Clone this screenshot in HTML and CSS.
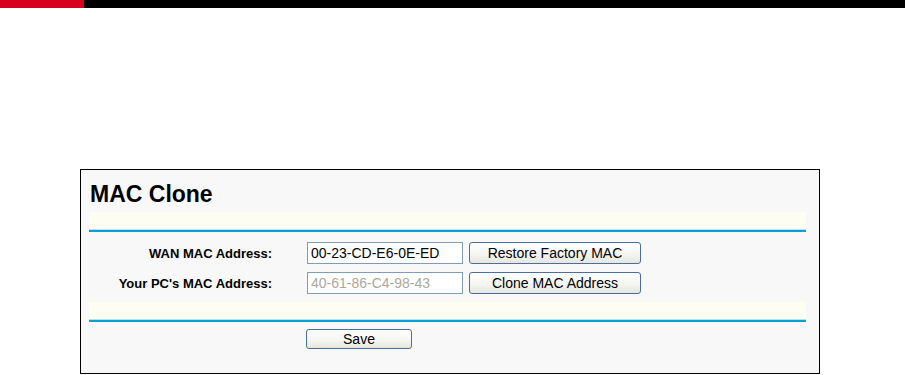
FILE: index.html
```html
<!DOCTYPE html>
<html lang="en">
<head>
  <meta charset="UTF-8">
  <title>MAC Clone</title>
  <link rel="stylesheet" href="styles.css">
</head>
<body>
  <div class="topbar"><div class="topbar-red"></div></div>

  <div class="panel">
    <h1 class="title">MAC Clone</h1>
    <div class="band"></div>

    <div class="rows">
      <label class="row-label" for="wanMac">WAN MAC Address:</label>
      <input class="mac" id="wanMac" type="text" value="00-23-CD-E6-0E-ED">
      <button class="btn btn-wide">Restore Factory MAC</button>

      <label class="row-label" for="pcMac">Your PC's MAC Address:</label>
      <input class="mac" id="pcMac" type="text" value="40-61-86-C4-98-43" disabled>
      <button class="btn btn-wide">Clone MAC Address</button>
    </div>

    <div class="band"></div>

    <div class="actions">
      <button class="btn btn-save">Save</button>
    </div>
  </div>
</body>
</html>
```

FILE: styles.css
```css
body {
  margin: 0;
  background: #fff;
  font-family: "Liberation Sans", Arial, sans-serif;
}
.topbar {
  height: 8px;
  background: #000;
}
.topbar-red {
  width: 84px;
  height: 8px;
  background: #d7001d;
}
.panel {
  margin: 161px 0 0 80px;
  width: 738px;
  height: 203px;
  border: 1px solid #000;
  background: #f8f8f8;
}
.title {
  margin: 0;
  padding: 11px 0 0 9px;
  font-size: 23px;
  line-height: 26px;
  font-weight: bold;
  color: #000;
}
.band {
  margin: 5px 13px 0 8px;
  height: 18px;
  background: #fdfdf1;
  box-shadow: inset 0 -1px 0 #b9e0ee;
  border-bottom: 2px solid #0a9fd4;
}
.rows {
  display: grid;
  grid-template-columns: 191px 156px 172px;
  column-gap: 6px;
  row-gap: 8px;
  align-items: center;
  padding: 10px 0 3px;
}
.row-label {
  text-align: right;
  font-size: 13px;
  font-weight: bold;
  color: #000;
}
.mac {
  margin-left: 29px;
  width: 156px;
  height: 22px;
  box-sizing: border-box;
  border: 1px solid #7f9db9;
  background: #fff;
  padding: 0 3px;
  font-family: inherit;
  font-size: 14px;
  color: #000;
}
.mac:disabled {
  color: #aca899;
  background: #fff;
}
.btn {
  height: 22px;
  box-sizing: border-box;
  border: 1px solid #4a6f9c;
  border-radius: 3px;
  background: linear-gradient(#ffffff, #f4f4f0 60%, #e6e5de);
  font-family: inherit;
  font-size: 14px;
  color: #000;
  padding: 0;
}
.btn-wide {
  margin-left: 29px;
  width: 172px;
}
.actions {
  padding: 7px 0 0 225px;
}
.btn-save {
  width: 106px;
  height: 20px;
}
```
